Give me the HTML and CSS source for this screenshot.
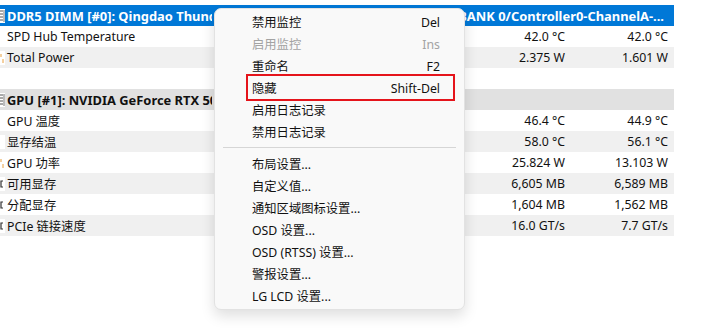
FILE: index.html
```html
<!DOCTYPE html>
<html lang="zh-CN">
<head>
    <meta charset="UTF-8">
    <title>Sensors</title>
    <link rel="stylesheet" href="styles.css">
</head>
<body>
    <div class="sensors">
        <div class="row head-blue">
            <span class="ico"><svg width="5" height="14" viewBox="0 0 5 14"><path d="M0 2h3M0 5h3M0 8h3M0 11h3" stroke="#555" stroke-width="1"/><path d="M4 1v12" stroke="#777" stroke-width="1"/></svg></span>
            <span class="name">DDR5 DIMM [#0]: Qingdao Thunderobot Technology Co., Ltd.</span>
            <span class="tail">BANK 0/Controller0-ChannelA-...</span>
        </div>
        <div class="row">
            <span class="ico"></span>
            <span class="name">SPD Hub Temperature</span>
            <span class="val">42.0 °C</span>
            <span class="val">42.0 °C</span>
        </div>
        <div class="row alt">
            <span class="ico"><svg width="5" height="14" viewBox="0 0 5 14"><path d="M1 3v3M3 8v4" stroke="#e8a040" stroke-width="1"/></svg></span>
            <span class="name">Total Power</span>
            <span class="val">2.375 W</span>
            <span class="val">1.601 W</span>
        </div>
        <div class="row"></div>
        <div class="row head-grey">
            <span class="ico"><svg width="5" height="14" viewBox="0 0 5 14"><path d="M0 2h3M0 5h3M0 8h3M0 11h3" stroke="#555" stroke-width="1"/><path d="M4 1v12" stroke="#777" stroke-width="1"/></svg></span>
            <span class="name">GPU [#1]: NVIDIA GeForce RTX 5060 Laptop GPU</span>
        </div>
        <div class="row">
            <span class="ico"></span>
            <span class="name">GPU 温度</span>
            <span class="val">46.4 °C</span>
            <span class="val">44.9 °C</span>
        </div>
        <div class="row alt">
            <span class="ico"></span>
            <span class="name">显存结温</span>
            <span class="val">58.0 °C</span>
            <span class="val">56.1 °C</span>
        </div>
        <div class="row">
            <span class="ico"><svg width="5" height="14" viewBox="0 0 5 14"><path d="M1 3v3M3 8v4" stroke="#e8a040" stroke-width="1"/></svg></span>
            <span class="name">GPU 功率</span>
            <span class="val">25.824 W</span>
            <span class="val">13.103 W</span>
        </div>
        <div class="row alt">
            <span class="ico"><svg width="5" height="14" viewBox="0 0 5 14"><path d="M3 4h-2v6h2" stroke="#333" stroke-width="1.2" fill="none"/></svg></span>
            <span class="name">可用显存</span>
            <span class="val">6,605 MB</span>
            <span class="val">6,589 MB</span>
        </div>
        <div class="row">
            <span class="ico"><svg width="5" height="14" viewBox="0 0 5 14"><path d="M3 4h-2v6h2" stroke="#333" stroke-width="1.2" fill="none"/></svg></span>
            <span class="name">分配显存</span>
            <span class="val">1,604 MB</span>
            <span class="val">1,562 MB</span>
        </div>
        <div class="row alt">
            <span class="ico"><svg width="5" height="14" viewBox="0 0 5 14"><path d="M3 4h-2v6h2" stroke="#333" stroke-width="1.2" fill="none"/></svg></span>
            <span class="name">PCIe 链接速度</span>
            <span class="val">16.0 GT/s</span>
            <span class="val">7.7 GT/s</span>
        </div>
    </div>

    <div class="menu">
        <div class="menu-item"><span>禁用监控</span><span class="key">Del</span></div>
        <div class="menu-item disabled"><span>启用监控</span><span class="key">Ins</span></div>
        <div class="menu-item"><span>重命名</span><span class="key">F2</span></div>
        <div class="menu-item"><span>隐藏</span><span class="key">Shift-Del</span></div>
        <div class="menu-item"><span>启用日志记录</span></div>
        <div class="menu-item"><span>禁用日志记录</span></div>
        <div class="separator"></div>
        <div class="menu-item"><span>布局设置...</span></div>
        <div class="menu-item"><span>自定义值...</span></div>
        <div class="menu-item"><span>通知区域图标设置...</span></div>
        <div class="menu-item"><span>OSD 设置...</span></div>
        <div class="menu-item"><span>OSD (RTSS) 设置...</span></div>
        <div class="menu-item"><span>警报设置...</span></div>
        <div class="menu-item"><span>LG LCD 设置...</span></div>
        <div class="highlight"></div>
    </div>
</body>
</html>
```

FILE: styles.css
```css
body {
    margin: 0;
    background: #fff;
    font-family: "Noto Sans", "Noto Sans CJK SC", sans-serif;
    font-size: 12.3px;
    color: #111;
}
.sensors {
    width: 674px;
    padding-top: 5px;
}
.row {
    display: flex;
    align-items: center;
    height: 21px;
    white-space: nowrap;
    overflow: hidden;
}
.row.alt {
    background-color: #f0f0f0;
}
.ico {
    width: 5px;
    height: 14px;
    flex: none;
    background: #fff;
}
.ico svg {
    display: block;
}
.name {
    flex: 1;
    padding-left: 2px;
    overflow: hidden;
}
.val {
    width: 103px;
    text-align: right;
    flex: none;
}
.val:last-child {
    padding-right: 6px;
}
.head-blue,
.head-grey {
    font-weight: bold;
    font-size: 12.9px;
}
.head-blue {
    background-color: #0078d7;
    color: #fff;
}
.head-grey {
    background-color: #e1e1e1;
}
.head-blue .name,
.head-grey .name {
    flex: none;
    width: 205px;
}
.head-blue .tail {
    flex: none;
    margin-left: auto;
    padding-right: 10px;
}
.menu {
    position: absolute;
    left: 214px;
    top: 8px;
    width: 249px;
    padding: 2px 0;
    background: #f9f9f9;
    border: 1px solid #e2e2e2;
    border-radius: 7px;
    box-shadow: 0 6px 14px rgba(0, 0, 0, 0.13);
}
.menu-item {
    display: flex;
    justify-content: space-between;
    align-items: center;
    height: 22px;
    padding: 0 24px 0 37px;
    color: #111;
}
.menu-item.disabled {
    color: #a3a3a3;
}
.separator {
    height: 1px;
    margin: 4px 8px 5px 8px;
    background: #d6d6d6;
}
.highlight {
    position: absolute;
    left: 31px;
    top: 65px;
    width: 205px;
    height: 23px;
    border: 2px solid #e5141b;
}
```
